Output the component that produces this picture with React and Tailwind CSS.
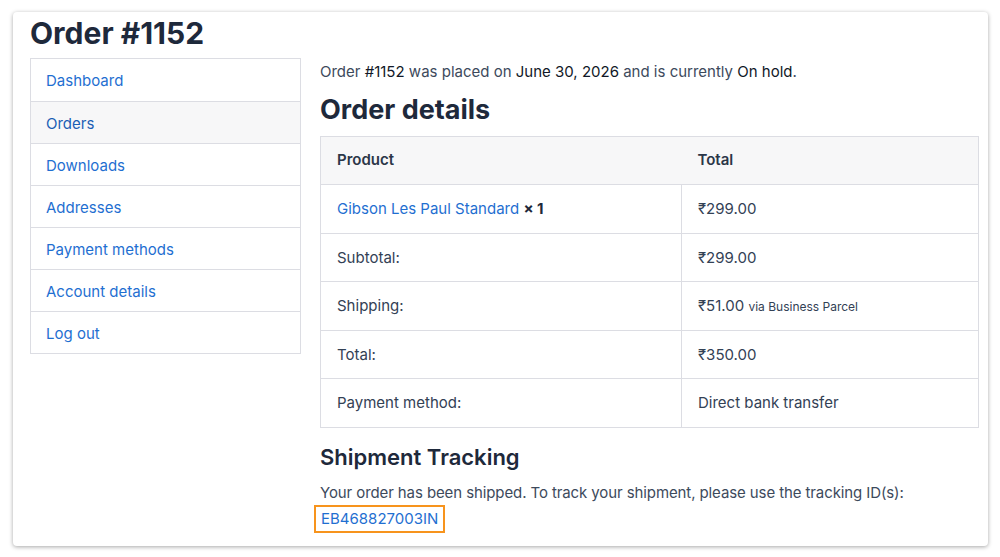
import React from "react";

const navItems = [
  { label: "Dashboard" },
  { label: "Orders", active: true },
  { label: "Downloads" },
  { label: "Addresses" },
  { label: "Payment methods" },
  { label: "Account details" },
  { label: "Log out" },
];

function Sidebar() {
  return (
    <nav className="w-[271px] shrink-0 border border-[#dcdde3]">
      {navItems.map((item, i) => (
        <a
          key={item.label}
          href="#"
          className={`block h-[42px] pl-[15px] pt-[10px] text-[15px] leading-[24px] ${
            i > 0 ? "border-t border-[#dcdde3]" : ""
          } ${item.active ? "bg-[#f7f7f8] text-[#1b5fb5]" : "text-[#1f6fd1]"}`}
        >
          {item.label}
        </a>
      ))}
    </nav>
  );
}

function Row({ label, children }) {
  return (
    <tr className="h-[48.5px] border-t border-[#dcdde3]">
      <td className="pl-[16px] pt-[1px] w-[361px] border-r border-[#dcdde3]">{label}</td>
      <td className="pl-[16px] pt-[1px]">{children}</td>
    </tr>
  );
}

export default function App() {
  return (
    <div className="min-h-[557px] bg-white pt-[12px] pl-[13px]" style={{ fontFamily: "Inter, 'Noto Sans', sans-serif" }}>
      <div className="w-[975px] h-[534px] rounded-[4px] bg-white shadow-[0_1px_4px_rgba(0,0,0,0.35)] pl-[17px] pr-[9px] text-[#334155]">
        <h1 className="pt-[3px] text-[30px] leading-[36px] font-bold text-[#1e293b]">Order #1152</h1>
        <div className="mt-[7px] flex items-start gap-[19px]">
          <Sidebar />
          <main className="flex-1">
            <p className="pt-[2px] text-[15px] leading-[24px] text-[#3d4a5c]">
              Order <span className="text-[#111827]">#1152</span> was placed on{" "}
              <span className="text-[#111827]">June 30, 2026</span> and is currently{" "}
              <span className="text-[#111827]">On hold</span>.
            </p>
            <h2 className="mt-[8px] text-[27px] leading-[36px] font-bold text-[#1e293b]">Order details</h2>
            <table className="mt-[8px] w-full border border-[#dcdde3] border-collapse text-[15px] text-[#334155]">
              <thead>
                <tr className="h-[48px] bg-[#f7f7f8] text-left">
                  <th className="pl-[16px] font-semibold text-[#2b3648]">Product</th>
                  <th className="pl-[16px] font-semibold text-[#2b3648]">Total</th>
                </tr>
              </thead>
              <tbody>
                <Row
                  label={
                    <span>
                      <a href="#" className="text-[#1f6fd1]">Gibson Les Paul Standard</a>{" "}
                      <strong className="font-bold text-[#1e293b]">× 1</strong>
                    </span>
                  }
                >
                  ₹299.00
                </Row>
                <Row label="Subtotal:">₹299.00</Row>
                <Row label="Shipping:">
                  ₹51.00 <span className="text-[12px]">via Business Parcel</span>
                </Row>
                <Row label="Total:">₹350.00</Row>
                <Row label="Payment method:">Direct bank transfer</Row>
              </tbody>
            </table>
            <h3 className="mt-[14px] text-[22px] leading-[30px] font-semibold text-[#1e293b]">Shipment Tracking</h3>
            <p className="mt-[9px] text-[15px] leading-[24px] text-[#3d4a5c] tracking-[-0.1px]">
              Your order has been shipped. To track your shipment, please use the tracking ID(s):
            </p>
            <a
              href="#"
              className="-ml-[6px] inline-block border-2 border-[#f7941d] px-[5px] text-[15px] leading-[24px] text-[#1f6fd1]"
            >
              EB468827003IN
            </a>
          </main>
        </div>
      </div>
    </div>
  );
}
